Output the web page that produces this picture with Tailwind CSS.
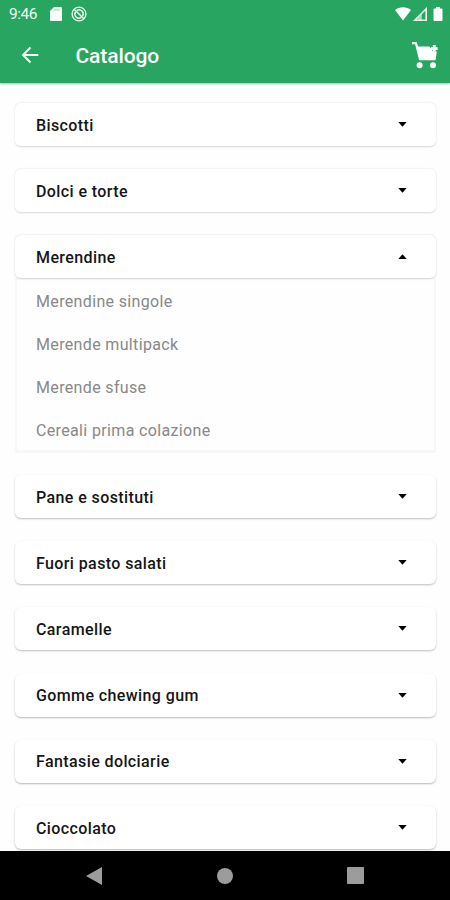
<!DOCTYPE html>
<html lang="it">
<head>
<meta charset="utf-8">
<meta name="viewport" content="width=device-width, initial-scale=1">
<title>Catalogo</title>
<script src="https://cdn.jsdelivr.net/npm/@tailwindcss/browser@4"></script>
</head>
<body class="bg-white">
<div class="flex h-[900px] w-[450px] flex-col overflow-hidden bg-[#fefefe] font-[Roboto,sans-serif]">
  <header class="z-10 h-[83px] shrink-0 bg-[#27a561] text-white shadow-[0_1px_2px_rgba(0,60,30,0.35)]">
    <div class="flex h-[27px] items-center pr-[7px] pl-[9px]">
      <span class="w-[41px] pt-[2px] text-[15.5px] leading-none tracking-[-0.5px] whitespace-nowrap text-[#f0fbf4]">9:46</span>
      <svg class="h-[14px] w-[12px]" viewBox="0 0 12 14"><path fill="#f4fff8" d="M4 0h7a1 1 0 0 1 1 1v12a1 1 0 0 1-1 1H1a1 1 0 0 1-1-1V4z"/><path stroke="#27a561" stroke-width=".8" d="M5 2v2M7 2v2M9 2v2" opacity=".55"/></svg>
      <svg class="ml-[9px] h-4 w-4" viewBox="0 0 16 16" fill="none" stroke="#e9f8ee"><circle cx="8" cy="8" r="6.900" stroke-width="1.400"/><path d="M3.200 3.200l9.600 9.600" stroke-width="1.600"/><path d="M6 4.500a4 4 0 0 1 5.500 5.500M4.500 6a4 4 0 0 0 5.500 5.500" stroke-width="1.500"/></svg>
      <svg class="ml-auto h-[14px] w-4" viewBox="0 0 16 14"><path fill="#fff" d="M0 3C4.500-.6 11.500-.6 16 3L8 13.500z"/></svg>
      <svg class="ml-[2px] h-[14px] w-[14px]" viewBox="0 0 14 14"><path fill="none" stroke="#e9f8ee" stroke-width="1.600" d="M1.800 13.200L13.200 1.800V13.200z"/><path fill="#e9f8ee" d="M5 13V10L8.800 6v7z" opacity=".65"/></svg>
      <svg class="ml-[6px] h-[14px] w-[10px]" viewBox="0 0 10 14"><path fill="#fff" d="M3 0h4v1.500h1.500a1 1 0 0 1 1 1V13a1 1 0 0 1-1 1h-7a1 1 0 0 1-1-1V2.500a1 1 0 0 1 1-1H3z"/></svg>
    </div>
    <div class="flex h-[56px] items-center pr-[11px] pl-[21px]">
      <svg class="h-[18px] w-[18px]" viewBox="0 0 18 18" fill="none" stroke="#f0fff5" stroke-width="2"><path d="M17.300 9H2.200M9.500 1.500L2 9l7.500 7.500"/></svg>
      <h1 class="ml-[36.500px] pt-[2px] text-[21px] leading-none font-medium tracking-[-0.1px]">Catalogo</h1>
      <svg class="ml-auto h-[28px] w-[28px]" viewBox="0 0 28 28"><path fill="none" stroke="#fff" stroke-width="2.200" stroke-linejoin="round" d="M1 2.200H5L9 18.200H24.500"/><path fill="#fff" d="M5.500 5.500H18.500L22 10.500H25.800L24.800 18H8.500z"/><path stroke="#fff" stroke-width="3" d="M23.300 4v7M20 7.500h6.600"/><circle cx="8.600" cy="24.300" r="3" fill="#fff"/><circle cx="22" cy="24.300" r="3" fill="#fff"/></svg>
    </div>
  </header>

  <main class="flex min-h-0 flex-1 flex-col gap-[23.200px] overflow-hidden pt-[20px] pr-[14px] pl-[15px] text-[16px] leading-none font-medium tracking-[0.4px] text-[#161616]">
    <div class="flex h-[43px] shrink-0 items-center justify-between rounded-[6px] bg-white pr-[29px] pl-[21px] shadow-[0_0.5px_2px_rgba(0,0,0,0.16)]"><span class="pt-[2px]">Biscotti</span><svg class="h-[5px] w-[9px]" viewBox="0 0 9 5"><path d="M.3 0h8.400L4.500 4.700z"/></svg></div>
    <div class="flex h-[43px] shrink-0 items-center justify-between rounded-[6px] bg-white pr-[29px] pl-[21px] shadow-[0_0.5px_2px_rgba(0,0,0,0.16)]"><span class="pt-[2px]">Dolci e torte</span><svg class="h-[5px] w-[9px]" viewBox="0 0 9 5"><path d="M.3 0h8.400L4.500 4.700z"/></svg></div>
    <section class="h-[216.500px] shrink-0">
      <div class="relative flex h-[43px] items-center justify-between rounded-[6px] bg-white pr-[29px] pl-[21px] shadow-[0_0.5px_2px_rgba(0,0,0,0.18)]"><span class="pt-[2px]">Merendine</span><svg class="h-[5px] w-[9px]" viewBox="0 0 9 5"><path d="M.3 5h8.400L4.500 .3z"/></svg></div>
      <ul class="h-[174.500px] border-x-2 border-b-3 border-[#f7f7f7] pt-[1.500px] pl-[19px] font-normal tracking-[0.35px] text-[#888]">
        <li class="flex h-[43.300px] items-center">Merendine singole</li>
        <li class="flex h-[43.300px] items-center">Merende multipack</li>
        <li class="flex h-[43.300px] items-center">Merende sfuse</li>
        <li class="flex h-[43.300px] items-center">Cereali prima colazione</li>
      </ul>
    </section>
    <div class="flex h-[43px] shrink-0 items-center justify-between rounded-[6px] bg-white pr-[29px] pl-[21px] shadow-[0_1px_2px_rgba(0,0,0,0.25)]"><span class="pt-[2px]">Pane e sostituti</span><svg class="h-[5px] w-[9px]" viewBox="0 0 9 5"><path d="M.3 0h8.400L4.500 4.700z"/></svg></div>
    <div class="flex h-[43px] shrink-0 items-center justify-between rounded-[6px] bg-white pr-[29px] pl-[21px] shadow-[0_1px_2px_rgba(0,0,0,0.25)]"><span class="pt-[2px]">Fuori pasto salati</span><svg class="h-[5px] w-[9px]" viewBox="0 0 9 5"><path d="M.3 0h8.400L4.500 4.700z"/></svg></div>
    <div class="flex h-[43px] shrink-0 items-center justify-between rounded-[6px] bg-white pr-[29px] pl-[21px] shadow-[0_1px_2px_rgba(0,0,0,0.25)]"><span class="pt-[2px]">Caramelle</span><svg class="h-[5px] w-[9px]" viewBox="0 0 9 5"><path d="M.3 0h8.400L4.500 4.700z"/></svg></div>
    <div class="flex h-[43px] shrink-0 items-center justify-between rounded-[6px] bg-white pr-[29px] pl-[21px] shadow-[0_1px_2px_rgba(0,0,0,0.28)]"><span class="pt-[2px]">Gomme chewing gum</span><svg class="h-[5px] w-[9px]" viewBox="0 0 9 5"><path d="M.3 0h8.400L4.500 4.700z"/></svg></div>
    <div class="flex h-[43px] shrink-0 items-center justify-between rounded-[6px] bg-white pr-[29px] pl-[21px] shadow-[0_1px_2px_rgba(0,0,0,0.28)]"><span class="pt-[2px]">Fantasie dolciarie</span><svg class="h-[5px] w-[9px]" viewBox="0 0 9 5"><path d="M.3 0h8.400L4.500 4.700z"/></svg></div>
    <div class="flex h-[43px] shrink-0 items-center justify-between rounded-[6px] bg-white pr-[29px] pl-[21px] shadow-[0_1px_2px_rgba(0,0,0,0.28)]"><span class="pt-[2px]">Cioccolato</span><svg class="h-[5px] w-[9px]" viewBox="0 0 9 5"><path d="M.3 0h8.400L4.500 4.700z"/></svg></div>
  </main>

  <nav class="flex h-[49px] shrink-0 items-center bg-black pl-[86px]">
    <svg class="h-[18px] w-4" viewBox="0 0 16 18"><path fill="#9c9c9c" d="M16 0v18L0 9z"/></svg>
    <div class="ml-[115px] h-4 w-4 rounded-full bg-[#9c9c9c]"></div>
    <div class="ml-[114px] h-[17px] w-[17px] rounded-[1px] bg-[#9c9c9c]"></div>
  </nav>
</div>
</body>
</html>
